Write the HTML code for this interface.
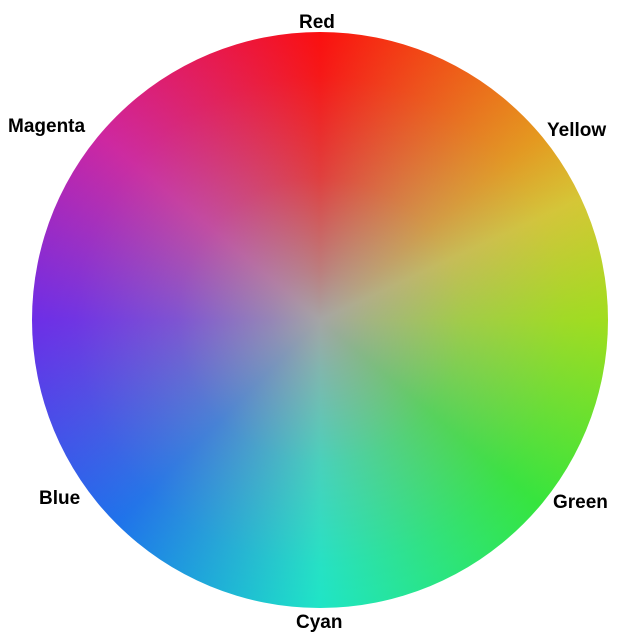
<!DOCTYPE html>
<html><head><meta charset="utf-8"><style>
html,body{margin:0;padding:0;background:#fff;width:640px;height:640px;overflow:hidden}
.w{position:absolute;left:32px;top:32px;width:576px;height:576px;border-radius:50%;
background:conic-gradient(from 0deg,#ff0808,#e89818 50deg,#d8c830 65deg,#a0e018 90deg,#30e838 130deg,#18e8c8 180deg,#1870ee 225deg,#6a28ea 270deg,#d020a0 310deg,#ff0808 360deg)}
.o{position:absolute;left:32px;top:32px;width:576px;height:576px;border-radius:50%;
background:radial-gradient(circle,rgba(165,165,165,1) 0%,rgba(165,165,165,.75) 12%,rgba(165,165,165,.35) 35%,rgba(165,165,165,.1) 60%,rgba(165,165,165,0) 80%)}
.l{position:absolute;font-family:"Liberation Sans",sans-serif;font-weight:bold;font-size:19px;color:#000;line-height:20px}
</style></head><body>
<div class="w"></div><div class="o"></div>
<div class="l" style="left:299px;top:13px">Red</div>
<div class="l" style="left:547px;top:121px">Yellow</div>
<div class="l" style="left:553px;top:493px">Green</div>
<div class="l" style="left:296px;top:613px">Cyan</div>
<div class="l" style="left:39px;top:489px">Blue</div>
<div class="l" style="left:8px;top:117px">Magenta</div>
</body></html>
